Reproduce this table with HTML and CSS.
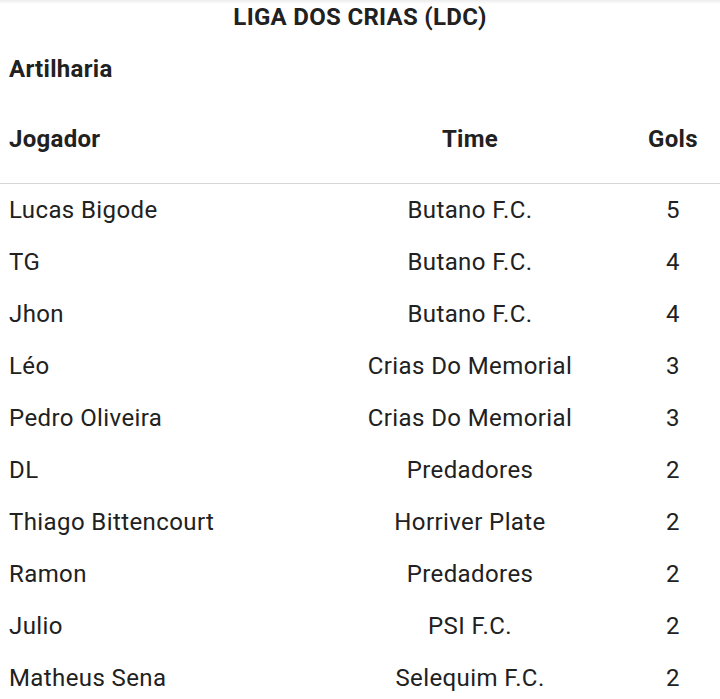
FILE: index.html
```html
<!DOCTYPE html>
<html lang="pt">
<head>
<meta charset="utf-8">
<title>Liga dos Crias</title>
<link rel="stylesheet" href="styles.css">
</head>
<body>
<div class="page">
  <h1 class="title">LIGA DOS CRIAS (LDC)</h1>
  <h2 class="section">Artilharia</h2>
  <div class="table">
    <div class="row head">
      <div class="c-player">Jogador</div>
      <div class="c-team">Time</div>
      <div class="c-goals">Gols</div>
    </div>
    <div class="row"><div class="c-player">Lucas Bigode</div><div class="c-team">Butano F.C.</div><div class="c-goals">5</div></div>
    <div class="row"><div class="c-player">TG</div><div class="c-team">Butano F.C.</div><div class="c-goals">4</div></div>
    <div class="row"><div class="c-player">Jhon</div><div class="c-team">Butano F.C.</div><div class="c-goals">4</div></div>
    <div class="row"><div class="c-player">Léo</div><div class="c-team">Crias Do Memorial</div><div class="c-goals">3</div></div>
    <div class="row"><div class="c-player">Pedro Oliveira</div><div class="c-team">Crias Do Memorial</div><div class="c-goals">3</div></div>
    <div class="row"><div class="c-player">DL</div><div class="c-team">Predadores</div><div class="c-goals">2</div></div>
    <div class="row"><div class="c-player">Thiago Bittencourt</div><div class="c-team">Horriver Plate</div><div class="c-goals">2</div></div>
    <div class="row"><div class="c-player">Ramon</div><div class="c-team">Predadores</div><div class="c-goals">2</div></div>
    <div class="row"><div class="c-player">Julio</div><div class="c-team">PSI F.C.</div><div class="c-goals">2</div></div>
    <div class="row"><div class="c-player">Matheus Sena</div><div class="c-team">Selequim F.C.</div><div class="c-goals">2</div></div>
  </div>
</div>
</body>
</html>
```
FILE: styles.css
```css
html, body {
  margin: 0;
  padding: 0;
  background: #ffffff;
}
body {
  font-family: Roboto, "Liberation Sans", sans-serif;
  color: #212121;
  overflow: hidden;
}
.page {
  width: 720px;
  background: linear-gradient(#ececec, #ffffff 4px);
}
.title {
  margin: 0;
  height: 34px;
  line-height: 34px;
  text-align: center;
  font-size: 24px;
  font-weight: 700;
  letter-spacing: 0.3px;
}
.section {
  margin: 0;
  height: 70px;
  line-height: 70px;
  padding-left: 9px;
  font-size: 24px;
  font-weight: 700;
  letter-spacing: 0.3px;
}
.row {
  display: grid;
  grid-template-columns: 314px 312px 94px;
  align-items: center;
  height: 52px;
  font-size: 24px;
  letter-spacing: 0.4px;
}
.row.head {
  height: 79px;
  align-items: start;
  font-weight: 700;
  letter-spacing: 0.3px;
  border-bottom: 1px solid #d6d6d6;
}
.row.head > div {
  padding-top: 21px;
}
.c-player {
  padding-left: 9px;
}
.c-team, .c-goals {
  text-align: center;
}
```
